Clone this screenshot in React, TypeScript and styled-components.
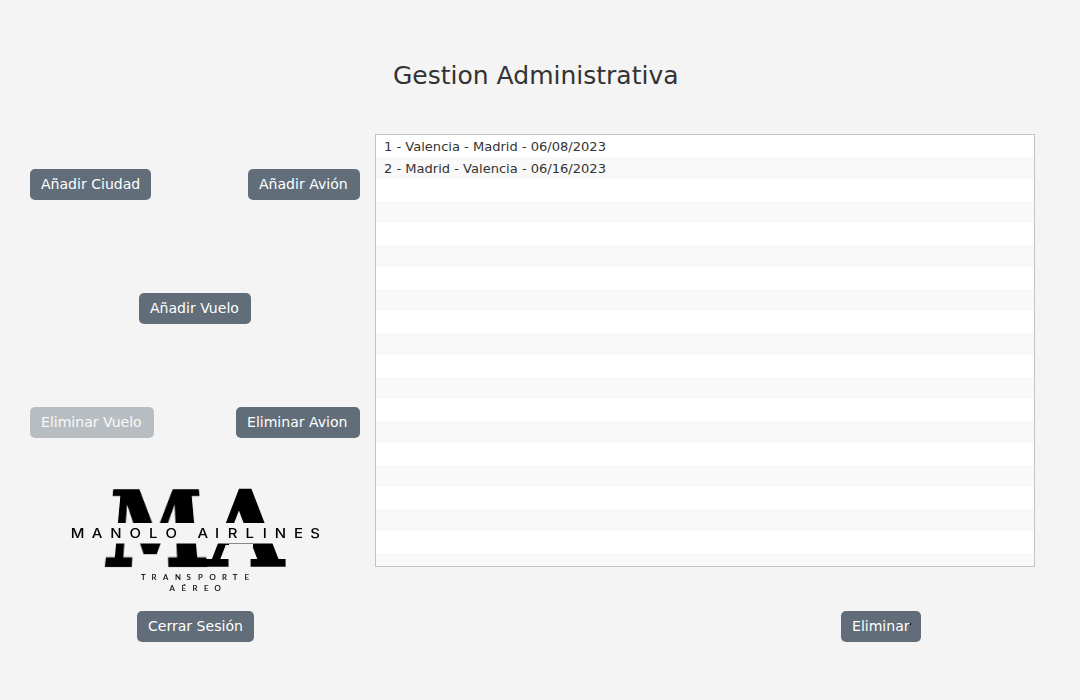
import React from "react";
import styled, { createGlobalStyle } from "styled-components";

const GlobalStyle = createGlobalStyle`
  * { box-sizing: border-box; }
  body {
    margin: 0;
    background: #f4f4f4;
    color: #333333;
    font-family: "DejaVu Sans", sans-serif;
  }
`;

const Window = styled.main`
  display: flex;
  flex-direction: column;
  width: 1080px;
  height: 700px;
  overflow: hidden;
  background: #f4f4f4;
`;

const Title = styled.h1`
  margin: 0;
  height: 134px;
  padding: 61px 0 0 393px;
  font-size: 25px;
  line-height: 30px;
  font-weight: 400;
  white-space: nowrap;
`;

const Content = styled.div`
  display: flex;
  gap: 15px;
  padding-left: 30px;
`;

const Sidebar = styled.nav`
  display: flex;
  flex-direction: column;
  width: 330px;
  padding-top: 35px;
`;

const ButtonRow = styled.div<{ $indent?: number; $gapAfter: number }>`
  display: flex;
  justify-content: space-between;
  padding-left: ${({ $indent }) => $indent ?? 0}px;
  margin-bottom: ${({ $gapAfter }) => $gapAfter}px;
`;

const Button = styled.button<{ $width: number }>`
  display: block;
  width: ${({ $width }) => $width}px;
  height: 31px;
  padding: 0 0 1px 11px;
  border: 0;
  border-radius: 5px;
  background: #616d79;
  color: #ffffff;
  font-family: inherit;
  font-size: 14.05px;
  line-height: 30px;
  text-align: left;
  white-space: nowrap;

  &:disabled {
    opacity: 0.4;
  }
`;

const Logo = styled.div`
  position: relative;
  width: 260px;
  height: 110px;
  margin: 0 0 19px 35px;
`;

/* Narrows the initial towards its top, keeping the baseline fixed. */
const TaperedInitial = styled.svg`
  position: absolute;
  left: 36px;
  top: 7px;
  width: 110px;
  height: 78px;
  overflow: visible;
  transform-origin: 50% 100%;
  transform: matrix3d(1, 0, 0, 0, 0, 1.2, 0, -0.00256, 0, 0, 1, 0, 0, 0, 0, 1);
`;

const LogoLayer = styled.svg`
  position: absolute;
  inset: 0;
  width: 260px;
  height: 110px;
  overflow: visible;
`;

const Main = styled.section`
  display: flex;
  flex-direction: column;
  width: 660px;
`;

const FlightList = styled.ul`
  height: 433px;
  margin: 0 0 44px;
  padding: 0;
  overflow: hidden;
  border: 1px solid #c3c3c3;
  background: #ffffff;
  list-style: none;
`;

const FlightRow = styled.li`
  height: 22px;
  padding: 1px 0 0 8px;
  font-size: 13.06px;
  line-height: 22px;
  white-space: pre;

  &:nth-child(even) {
    background: #f9f9f9;
  }
`;

const Footer = styled.div`
  display: flex;
  padding-left: 466px;
`;

const DeleteAction = styled.div`
  position: relative;
`;

const Mark = styled.i`
  position: absolute;
  left: 69px;
  top: 12px;
  width: 1px;
  height: 2px;
  background: #000000;
`;

const flights = [
  "1 - Valencia - Madrid - 06/08/2023",
  "2 - Madrid - Valencia - 06/16/2023",
];
const ROW_COUNT = 20;

const NAME_STRETCH = 1.12;
const NAME_STARTS = [70.8, 91.7, 110.2, 129.4, 149, 165.5, 187, 197.4, 215, 227.8, 245.5, 262.7, 274.8, 294, 310.3];
const nameX = NAME_STARTS.map((x) => (x / NAME_STRETCH).toFixed(2)).join(" ");

function AirlineLogo() {
  return (
    <Logo role="img" aria-label="Manolo Airlines">
      <TaperedInitial viewBox="0 0 110 78">
        <text transform="translate(55.3 77) scale(.95 1)" textAnchor="middle" fontSize="104"
          fontFamily="DejaVu Serif, serif" fontWeight="700" stroke="#000" strokeWidth="2">M</text>
      </TaperedInitial>
      <LogoLayer viewBox="65 482 260 110">
        <text transform="translate(207.3 566.4) scale(.94 1)" fontSize="105"
          fontFamily="DejaVu Serif, serif" fontWeight="700" stroke="#000" strokeWidth="1.4">A</text>
        <rect x="65" y="523" width="260" height="20.5" fill="#f4f4f4" />
        <rect x="229" y="542" width="24" height="5" fill="#f4f4f4" />
        <rect x="223" y="543" width="31" height="1" fill="#888" />
        <text y="537.7" transform={`scale(${NAME_STRETCH} 1)`} fontFamily="Inter, sans-serif"
          fontSize="13.4" fontWeight="500" x={nameX}>MANOLO AIRLINES</text>
        <g fontFamily="Lato, sans-serif" fontSize="7.8" stroke="#000" strokeWidth=".15">
          <text y="580" x="141 151.5 163 175 186.5 198 209.5 222 232.7 244.5">TRANSPORTE</text>
          <text y="591" x="169.5 181.5 192.5 204 214.5">AÉREO</text>
        </g>
      </LogoLayer>
    </Logo>
  );
}

export default function App() {
  return (
    <>
      <GlobalStyle />
      <Window>
        <Title>Gestion Administrativa</Title>
        <Content>
          <Sidebar>
            <ButtonRow $gapAfter={93}>
              <Button $width={121}>Añadir Ciudad</Button>
              <Button $width={112}>Añadir Avión</Button>
            </ButtonRow>
            <ButtonRow $indent={109} $gapAfter={83}>
              <Button $width={112}>Añadir Vuelo</Button>
            </ButtonRow>
            <ButtonRow $gapAfter={44}>
              <Button $width={124} disabled>Eliminar Vuelo</Button>
              <Button $width={124}>Eliminar Avion</Button>
            </ButtonRow>
            <AirlineLogo />
            <ButtonRow $indent={107} $gapAfter={0}>
              <Button $width={117}>Cerrar Sesión</Button>
            </ButtonRow>
          </Sidebar>
          <Main>
            <FlightList>
              {Array.from({ length: ROW_COUNT }, (_, i) => (
                <FlightRow key={i}>{flights[i]}</FlightRow>
              ))}
            </FlightList>
            <Footer>
              <DeleteAction>
                <Button $width={80}>Eliminar</Button>
                <Mark />
              </DeleteAction>
            </Footer>
          </Main>
        </Content>
      </Window>
    </>
  );
}
